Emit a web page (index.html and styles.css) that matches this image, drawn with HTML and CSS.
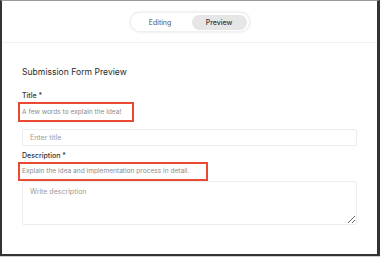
FILE: index.html
```html
<!DOCTYPE html>
<html lang="en">
<head>
  <meta charset="UTF-8" />
  <meta name="viewport" content="width=device-width, initial-scale=1" />
  <title>Submission Form Preview</title>
  <link rel="stylesheet" href="styles.css">
</head>
<body>
  <div class="frame">
    <header class="topbar">
      <div class="toggle">
        <button class="toggle-btn">Editing</button>
        <button class="toggle-btn active">Preview</button>
      </div>
    </header>

    <main class="form">
      <h2 class="form-title">Submission Form Preview</h2>

      <div class="field">
        <label class="label">Title <span class="req">*</span></label>
        <div class="hint hint-title">A few words to explain the idea!</div>
        <input type="text" class="input" placeholder="Enter title" />
      </div>

      <div class="field">
        <label class="label">Description <span class="req">*</span></label>
        <div class="hint hint-desc">Explain the idea and implementation process in detail.</div>
        <textarea class="input textarea" placeholder="Write description"></textarea>
      </div>
    </main>
  </div>
</body>
</html>
```

FILE: styles.css
```css
* { box-sizing: border-box; }
body {
  margin: 0;
  background-color: #cfcfcf;
  font-family: Inter, 'Noto Sans', sans-serif;
  color: #333;
}
.frame {
  height: 256px;
  background-color: #fff;
  border: 2px solid #333;
  border-top: 1px solid #9a9a9a;
  border-right-width: 3px;
}
.topbar {
  height: 42px;
  padding-top: 11px;
  border-bottom: 1px solid #f1f1f1;
  display: flex;
  justify-content: center;
  align-items: flex-start;
}
.toggle {
  display: flex;
  align-items: center;
  gap: 4px;
  width: 120px;
  height: 20px;
  padding: 2px;
  border-radius: 10px;
  background-color: #fff;
  box-shadow: 0 0 3px rgba(0, 0, 0, 0.12);
  border: 1px solid #f0f0f0;
}
.toggle-btn {
  flex: 1;
  height: 15px;
  border: none;
  border-radius: 8px;
  background: none;
  font-family: inherit;
  font-size: 7px;
  color: #555;
  padding: 0;
  cursor: pointer;
}
.toggle-btn.active {
  background-color: #e6e6e6;
  color: #333;
  font-weight: 500;
}
.form {
  padding: 24px 20px 0;
}
.form-title {
  margin: 0 0 14px;
  font-size: 8.6px;
  font-weight: 400;
  color: #2a2a2a;
}
.field {
  margin-bottom: 5px;
}
.label {
  display: block;
  font-size: 7px;
  font-weight: 500;
  color: #333;
  margin-bottom: 2px;
}
.hint {
  margin-left: -4px;
  height: 20px;
  border: 2px solid #ea4a33;
  padding: 0 0 0 2px;
  font-size: 6.6px;
  line-height: 16px;
  color: #8c8c8c;
}
.hint-title { width: 116px; margin-bottom: 7px; }
.hint-desc { width: 190px; height: 19px; line-height: 15px; }
.input {
  display: block;
  width: 100%;
  height: 17px;
  border: 1px solid #ededed;
  border-radius: 2px;
  padding: 0 7px;
  font-family: inherit;
  font-size: 7px;
  color: #333;
  outline: none;
}
.input::placeholder {
  color: #9a9a9a;
}
.textarea {
  height: 44px;
  padding: 5px 7px;
  resize: vertical;
}
```
